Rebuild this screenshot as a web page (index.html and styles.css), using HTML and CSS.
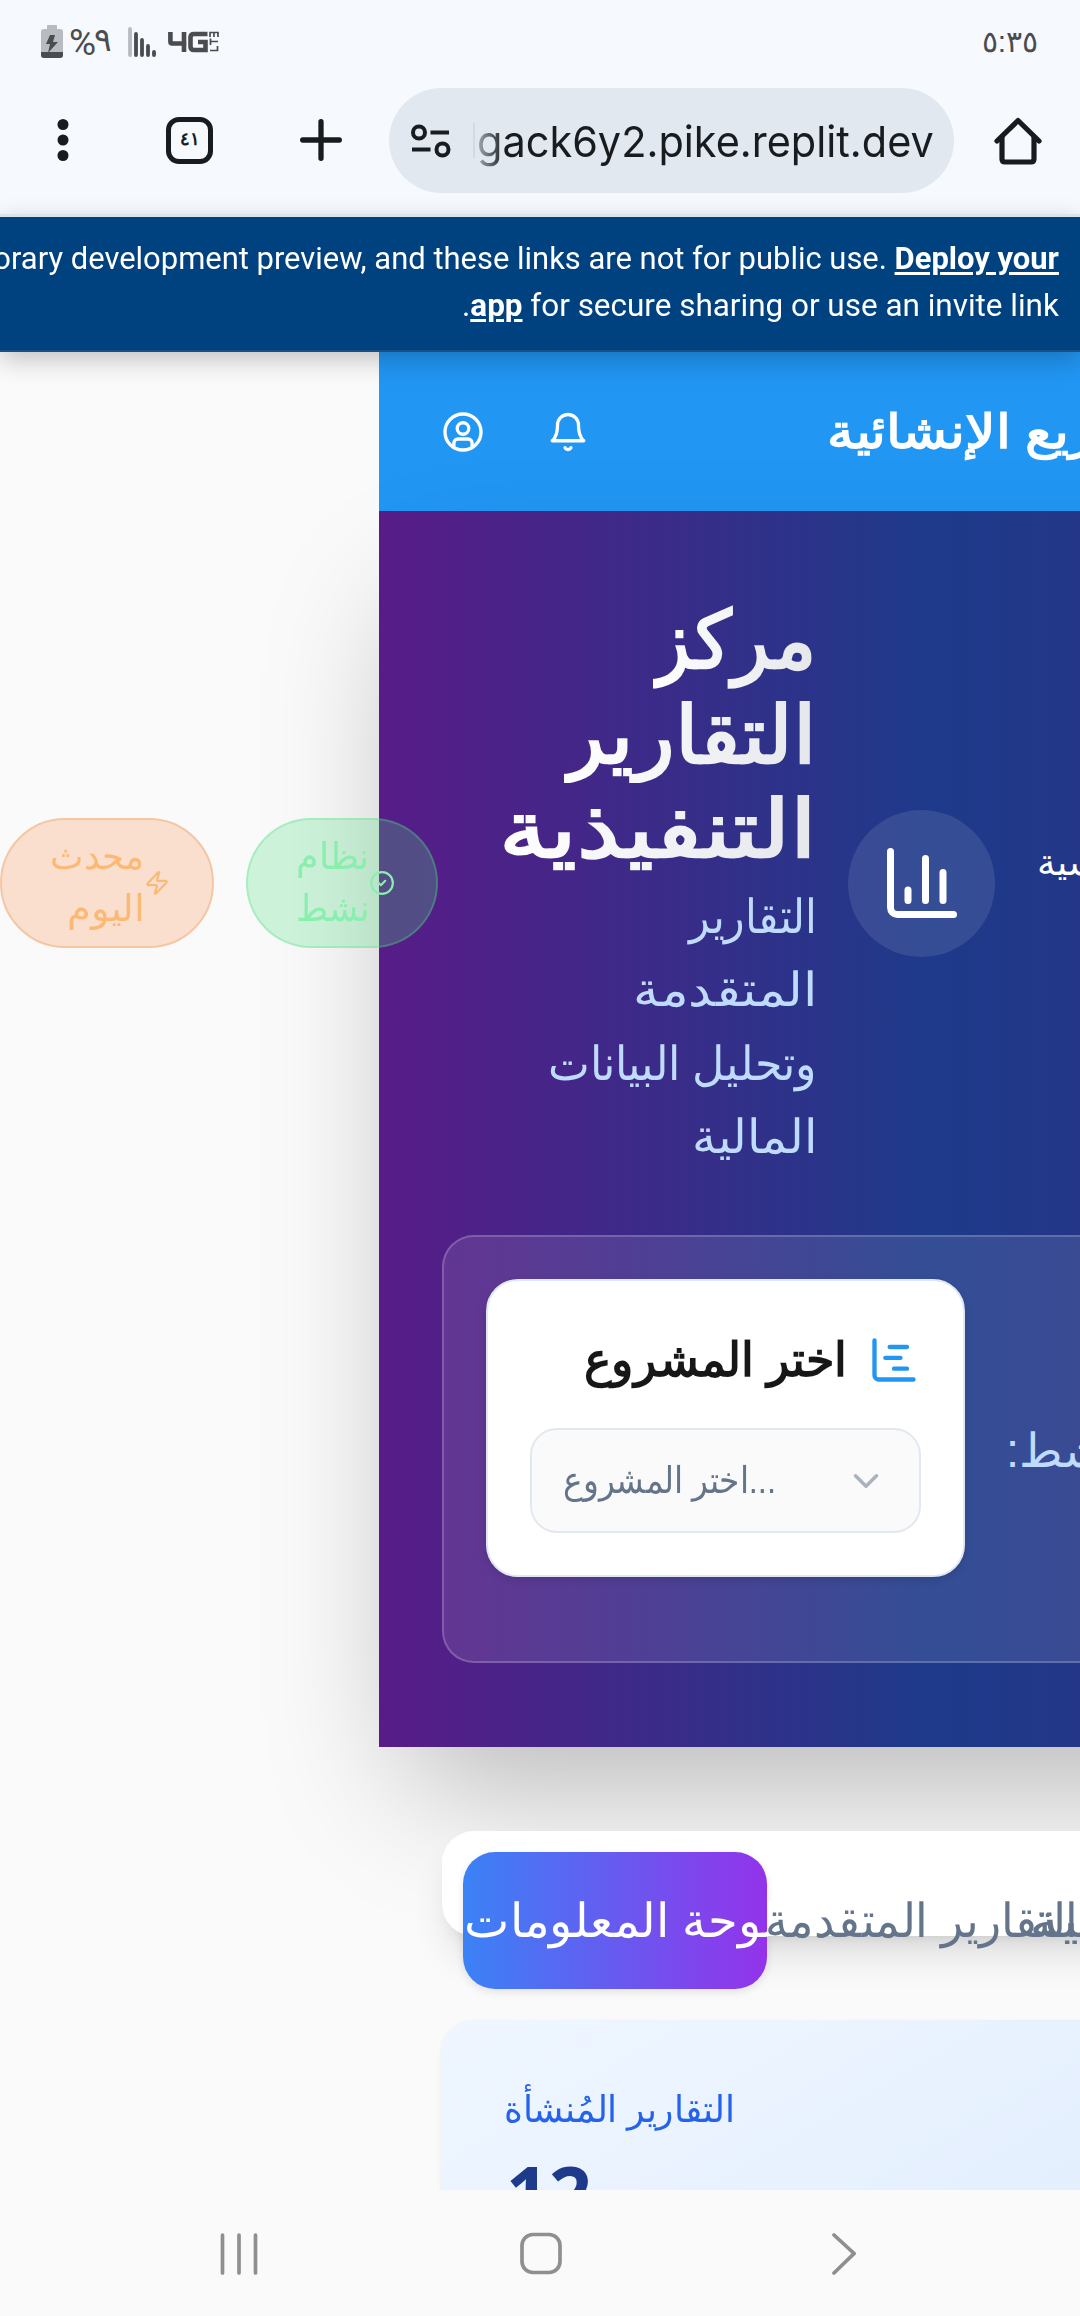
FILE: index.html
```
<!DOCTYPE html>
<html lang="ar">
<head>
<meta charset="utf-8">
<title>مركز التقارير التنفيذية</title>
<link rel="stylesheet" href="styles.css">
</head>
<body>
<div class="phone">
  <header class="status">
    <svg class="battery" width="22" height="34" viewBox="0 0 22 34"><path d="M6 0h10v4h3a3 3 0 0 1 3 3v23a3 3 0 0 1-3 3H3a3 3 0 0 1-3-3V7a3 3 0 0 1 3-3h3z" fill="#b8bcc2"/><path d="M0 27h22v3a3 3 0 0 1-3 3H3a3 3 0 0 1-3-3z" fill="#4a4c4f"/><path d="M9 10h5l-2 7h5L7 28l2-9H5z" fill="#4a4c4f"/></svg>
    <span class="percent"><span class="sign">%</span><span class="nine">٩</span></span>
    <svg class="signal" width="28" height="30" viewBox="0 0 28 30" stroke-width="3.8" stroke-linecap="round"><path d="M2 2v26" stroke="#b8bcc2"/><path d="M8 7v21M14 13v15M20 19v9M26 25v3" stroke="#4a4c4f"/></svg>
    <svg class="net" width="52" height="22" viewBox="0 0 52 22" fill="none" stroke="#4a4c4f"><path d="M2.4 1v9.500q0 2 2 2h14M16 1v20" stroke-width="4.600"/><path d="M39.500 3H26q-3.500 0-3.500 3.500v9Q22.500 19 26 19h11.500v-8H30" stroke-width="4.600"/><path d="M42 19.500h7.500V15M42 10.500h8M42.500 7.500V14M42 6V1.500h8V6M46 2v4" stroke-width="1.700"/></svg>
    <span class="clock">٥:٣٥</span>
  </header>

  <nav class="toolbar">
    <svg class="dots" width="12" height="44" viewBox="0 0 12 44" fill="#191c1f"><circle cx="6" cy="6.500" r="5.500"/><circle cx="6" cy="22" r="5.500"/><circle cx="6" cy="37.500" r="5.500"/></svg>
    <span class="tabcount"><span>٤١</span></span>
    <svg class="plus" width="42" height="42" viewBox="0 0 42 42" stroke="#191c1f" stroke-width="5.300" stroke-linecap="round"><path d="M21 2.700v36.600M2.700 21h36.600"/></svg>
    <div class="urlbar">
      <svg class="tune" width="40" height="34" viewBox="0 0 40 34" fill="none" stroke="#191c1f" stroke-width="4"><circle cx="8" cy="8.500" r="6"/><path d="M19.500 8.500H38M1 25.500h18.500"/><circle cx="31.500" cy="25.500" r="6"/></svg>
      <span class="divider"></span>
      <span class="url"><span class="fit left" data-fit="457">gack6y2.pike.replit.dev</span></span>
    </div>
    <svg class="home" width="48" height="48" viewBox="0 0 48 48" fill="none" stroke="#191c1f" stroke-width="5.200" stroke-linejoin="round" stroke-linecap="round"><path d="M3 24 24 3.500 45 24"/><path d="M8 20v22q0 3 3 3h26q3 0 3-3V20"/></svg>
  </nav>

  <aside class="banner">
    <p><span class="fit" data-fit="1259">This is a temporary development preview, and these links are not for public use. <a>Deploy your</a></span></p>
    <p><span class="fit" data-fit="597">.<a>app</a> for secure sharing or use an invite link</span></p>
  </aside>

  <main class="page">
    <div class="app">
      <div class="appbar">
        <svg width="42" height="42" viewBox="0 0 24 24" class="ico"><circle cx="12" cy="12" r="10.300"/><circle cx="12" cy="10" r="3.300"/><path d="M6.800 19.800v-1.500a2.300 2.300 0 0 1 2.300-2.300h5.800a2.300 2.300 0 0 1 2.300 2.300v1.500"/></svg>
        <svg width="42" height="42" viewBox="0 0 24 24" class="ico"><path d="M6 8a6 6 0 0 1 12 0c0 7 3 9 3 9H3s3-2 3-9M10.300 21a1.940 1.940 0 0 0 3.400 0"/></svg>
        <h1 dir="rtl">إدارة المشاريع الإنشائية</h1>
      </div>

      <section class="hero">
        <div class="headline">
          <div class="badge orange">
            <p dir="rtl"><span class="fit" data-fit="94">محدث</span><span class="fit" data-fit="77">اليوم</span></p>
            <svg width="26" height="26" viewBox="0 0 24 24" class="ico"><path d="M4 14a1 1 0 0 1-.78-1.630l9.900-10.200a.5.5 0 0 1 .86.460l-1.920 6.020A1 1 0 0 0 13 10h7a1 1 0 0 1 .78 1.630l-9.900 10.200a.5.5 0 0 1-.86-.460l1.920-6.020A1 1 0 0 0 11 14z"/></svg>
          </div>
          <div class="badge green">
            <p dir="rtl"><span class="fit" data-fit="73">نظام</span><span class="fit" data-fit="73">نشط</span></p>
            <svg width="26" height="26" viewBox="0 0 24 24" class="ico"><circle cx="12" cy="12" r="10"/><path d="m9 12 2 2 4-4"/></svg>
          </div>
          <div class="titles" dir="rtl">
            <h2><span class="fit" data-fit="163">مركز</span><span class="fit" data-fit="252">التقارير</span><span class="fit" data-fit="317">التنفيذية</span></h2>
            <p><span class="fit" data-fit="128">التقارير</span><span class="fit" data-fit="184">المتقدمة</span><span class="fit" data-fit="269">وتحليل البيانات</span><span class="fit" data-fit="125">المالية</span></p>
          </div>
          <div class="disc"><svg width="84" height="84" viewBox="0 0 24 24" class="ico"><path d="M3 3v16a2 2 0 0 0 2 2h16M18 17V9M13 17V5M8 17v-3"/></svg></div>
          <span class="mainlink" dir="rtl">الرئيسية</span>
        </div>

        <div class="panel">
          <div class="picker">
            <div class="label">
              <h3 dir="rtl"><span class="fit" data-fit="263">اختر المشروع</span></h3>
              <svg width="52" height="52" viewBox="0 0 24 24" class="ico"><path d="M10 6h8M12 16h6M3 3v16a2 2 0 0 0 2 2h16M8 11h7"/></svg>
            </div>
            <div class="select">
              <span class="fit left" data-fit="213">اختر المشروع...</span>
              <svg width="42" height="42" viewBox="0 0 24 24" class="ico"><path d="m6 9 6 6 6-6"/></svg>
            </div>
          </div>
          <span class="active" dir="rtl">المشروع النشط:</span>
        </div>
      </section>

      <div class="tabs">
        <span class="tab on" dir="rtl"><span class="fit both" data-fit="312">لوحة المعلومات</span></span>
        <span class="tab" dir="rtl"><span class="fit both" data-fit="313">التقارير المتقدمة</span></span>
        <span class="tab last" dir="rtl"><span class="fit both" data-fit="400">التحليلات المالية</span></span>
      </div>

      <section class="stat">
        <p dir="rtl"><span class="fit" data-fit="230">التقارير المُنشأة</span></p>
        <strong>12</strong>
      </section>
    </div>
  </main>

  <footer class="sysnav">
    <svg width="40" height="44" viewBox="0 0 40 44"><path d="M3.500 3v38M20 3v38M36.500 3v38"/></svg>
    <svg width="44" height="44" viewBox="0 0 44 44"><rect x="3" y="2.500" width="38" height="38" rx="11"/></svg>
    <svg width="24" height="44" viewBox="0 0 24 44"><path d="M2 3l20 18.500L2 41"/></svg>
  </footer>
</div>
<script src="fit.js"></script>
</body>
</html>
```
FILE: styles.css
```
* { box-sizing: border-box; margin: 0; padding: 0; }
body { width: 1080px; height: 2316px; overflow: hidden; font-family: sans-serif; }
svg { display: block; flex: none; }
.phone { width: 1080px; height: 2316px; display: flex; flex-direction: column; overflow: hidden; background: #f6f9fe; }
.ico { fill: none; stroke: currentColor; stroke-width: 2; stroke-linecap: round; stroke-linejoin: round; }
.fit { display: block; width: max-content; white-space: nowrap; transform-origin: right center; }
.fit.left { transform-origin: left center; }
.fit.both { transform-origin: center; }

.status { height: 84px; flex: none; display: flex; align-items: center; padding: 0 42px 0 41px; color: #4a4c4f; }
.percent { display: flex; align-items: center; width: 43px; margin-left: 6px; font: 37px/40px Roboto, sans-serif; }
.percent .sign { margin-top: 2px; }
.percent .nine { margin-top: -5px; margin-left: -2px; font-family: sans-serif; font-size: 33px; }
.signal { margin-left: 16px; }
.net { margin-left: 12px; }
.clock { margin-left: auto; font-size: 30px; line-height: 40px; }

.toolbar { height: 130px; flex: none; display: flex; align-items: flex-start; padding-left: 57px; }
.dots { margin-top: 34px; }
.tabcount { width: 47px; height: 47px; margin: 33px 0 0 97px; border: 5.500px solid #191c1f; border-radius: 13px; display: flex; justify-content: center; font-size: 18px; font-weight: 700; line-height: 34px; color: #191c1f; }
.plus { margin: 35px 0 0 87px; }
.urlbar { width: 565px; height: 105px; margin: 4px 0 0 47px; border-radius: 53px; background: #e1e8f0; display: flex; align-items: center; padding-left: 22px; }
.divider { width: 2px; height: 35px; margin: 0 2px 0 22px; background: #d3dae3; }
.url { width: 460px; font: 43px/60px Inter, sans-serif; color: #191c1f; -webkit-mask-image: linear-gradient(90deg, rgba(0,0,0,.3), #000 28px); mask-image: linear-gradient(90deg, rgba(0,0,0,.3), #000 28px); }
.home { margin: 33px 0 0 40px; }

.banner { height: 138px; flex: none; border-top: 3px solid #dae4ed; border-bottom: 2px solid #1a4f88; background: #00417f; color: #fff; padding: 18px 21px 0 0; font: 31.500px/47px Roboto, sans-serif; box-shadow: 0 8px 24px rgba(0,0,0,.22); position: relative; z-index: 2; }
.banner p { height: 47px; display: flex; justify-content: flex-end; }
.banner a { font-weight: 700; text-decoration: underline; text-underline-offset: 3px; text-decoration-thickness: 3px; }

.page { height: 1838px; flex: none; overflow: hidden; background: #fafafa; padding-left: 379px; }
.app { width: 701px; }
.appbar { height: 159px; background: #2196f3; color: #fff; display: flex; align-items: center; padding-left: 63px; gap: 63px; }
.appbar h1 { margin-left: 175px; font-size: 47px; line-height: 70px; white-space: nowrap; transform: scaleX(1.14); transform-origin: left; }
.appbar .ico { stroke-width: 1.900; }

.hero { width: 1100px; height: 1236px; padding-top: 83px; background: linear-gradient(90deg, #581c87, #1e3a8a 50%, #312e81); box-shadow: 0 66px 131px -31px rgba(0,0,0,.28); color: #fff; }
.headline { height: 578px; margin-left: -379px; display: flex; align-items: center; }
.badge { height: 130px; flex: none; border: 2px solid; border-radius: 65px; display: flex; align-items: center; justify-content: flex-end; font-size: 36.750px; line-height: 52.500px; }
.badge p { width: 92px; }
.orange { width: 214px; padding-right: 42px; background: #fbdfce; border-color: #f5c6a4; color: #fbb975; }
.green { width: 192px; margin-left: 32px; padding-right: 41px; background: rgba(74,222,128,.25); border-color: rgba(74,222,128,.3); color: #8aeeae; }
.titles { width: 310px; flex: none; margin-left: 66px; }
.titles h2 { font-size: 80px; line-height: 94.500px; color: #f3f4f6; width: 308px; margin-right: -2px; }
.titles h2 .fit { background: linear-gradient(90deg, #fff, #e5e7eb); -webkit-background-clip: text; background-clip: text; color: transparent; }
.titles p { margin: 2px -3px -2px 0; font-size: 47px; line-height: 73.500px; color: #bfdbfe; }
.disc { width: 147px; height: 147px; flex: none; margin-left: 34px; border-radius: 50%; background: rgba(255,255,255,.1); display: flex; align-items: center; justify-content: center; }
.mainlink { margin: 0 0 40px 42px; font-size: 37px; line-height: 52px; }

.panel { width: 1000px; height: 428px; margin: 63px 0 0 63px; padding: 42px; border: 2px solid rgba(255,255,255,.2); border-radius: 32px; background: rgba(255,255,255,.1); display: flex; align-items: flex-start; }
.picker { width: 479px; height: 298px; flex: none; padding: 42px 42px; background: #fff; border: 2px solid #dfe8f4; border-radius: 32px; box-shadow: 0 3px 8px rgba(0,0,0,.12); }
.label { height: 74px; display: flex; justify-content: flex-end; align-items: center; gap: 21px; padding-right: 1px; color: #2196f3; }
.label h3 { font-size: 47px; line-height: 74px; color: #171717; }
.select { height: 105px; margin-top: 31px; border: 2px solid #e2e8f0; border-radius: 27px; background: #fafafa; display: flex; align-items: center; justify-content: space-between; padding: 0 32px 0 31px; font-size: 37px; line-height: 52px; color: #64748b; }
.select .ico { color: #aab2bd; }
.active { margin: 135px 0 0 41px; font-size: 47.250px; line-height: 74px; color: #bfdbfe; white-space: nowrap; }

.tabs { width: 1000px; height: 105px; margin: 84px 0 0 63px; padding: 21px; border-radius: 32px; background: #fff; box-shadow: 0 26px 39px -8px rgba(0,0,0,.12), 0 10px 15px -10px rgba(0,0,0,.12); display: flex; align-items: flex-start; position: relative; }
.tab { width: 304px; height: 137px; flex: none; display: flex; align-items: center; justify-content: center; padding-left: 6px; font-size: 47px; line-height: 70px; color: #64748b; border-radius: 32px; }
.tab.on { padding-left: 12px; color: #fff; background: linear-gradient(90deg, #3b82f6, #9333ea); box-shadow: 0 3px 8px rgba(0,0,0,.1); }
.tab.last { width: 312px; }

.stat { width: 1000px; height: 400px; margin: 84px 0 0 62px; padding: 64px 65px; border-radius: 32px; background: linear-gradient(150deg, #eff6ff, #dbeafe); box-shadow: 0 2px 5px rgba(0,0,0,.06); position: relative; }
.stat p { width: 228px; font-size: 37px; line-height: 52.500px; color: #2563eb; }
.stat strong { display: block; margin-top: 13px; font: 700 75px/84px "Open Sans", sans-serif; color: #1e3a8a; }

.sysnav { height: 126px; flex: none; background: #fafafa; display: flex; align-items: flex-start; padding: 42px 0 0 219px; position: relative; z-index: 3; }
.sysnav svg { fill: none; stroke: #8f8f8f; stroke-width: 3.700; stroke-linecap: round; }
.sysnav svg + svg { margin-left: 260px; }
.sysnav svg:last-child { margin-left: 269px; }
```
FILE: fit.js
```
// Squeezes or stretches each line so it takes the width its slot was designed for.
for (const el of document.querySelectorAll('.fit')) {
  el.style.transform = `scaleX(${el.dataset.fit / el.offsetWidth})`;
}
```
